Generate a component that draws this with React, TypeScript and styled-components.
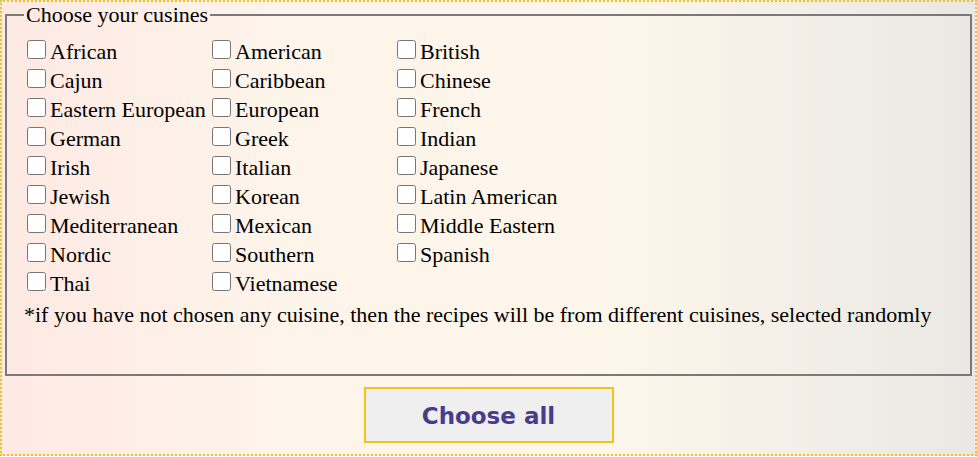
import styled, { createGlobalStyle } from "styled-components";

const GlobalStyle = createGlobalStyle`
	html, body {
		margin: 0;
		padding: 0;
		background: #ffffff;
	}
`;

const cuisines = [
	"African", "American", "British",
	"Cajun", "Caribbean", "Chinese",
	"Eastern European", "European", "French",
	"German", "Greek", "Indian",
	"Irish", "Italian", "Japanese",
	"Jewish", "Korean", "Latin American",
	"Mediterranean", "Mexican", "Middle Eastern",
	"Nordic", "Southern", "Spanish",
	"Thai", "Vietnamese",
];

const Wrapper = styled.form`
	box-sizing: border-box;
	width: 977px;
	height: 456px;
	border: 2px dotted #f3c21a;
	padding: 0 0 11px;
	background: linear-gradient(90deg, #fee9e3 0%, #fdf4ea 28%, #fdf6ea 62%, #eae8e4 100%);
	display: flex;
	flex-direction: column;
	align-items: center;
	font-family: "Liberation Serif", "Times New Roman", serif;
	font-size: 22px;
	color: #000;
`;

const Fieldset = styled.fieldset`
	box-sizing: border-box;
	align-self: stretch;
	margin: 0 3px;
	height: 374px;
	border: 2px solid #7a7a7a;
	padding: 8px 17px 0;
	min-inline-size: 0;
`;

const Legend = styled.legend`
	padding: 0 2px;
	line-height: 25px;
`;

const Grid = styled.div`
	display: grid;
	grid-template-columns: repeat(3, 185px);
	grid-auto-rows: 29px;
`;

const Option = styled.label`
	display: flex;
	align-items: flex-end;
	line-height: 25px;
	white-space: nowrap;
	cursor: pointer;
`;

const Box = styled.input`
	width: 19px;
	height: 19px;
	margin: 0 4px 5px 3px;
	flex-shrink: 0;
`;

const Note = styled.p`
	margin: 6px 0 0;
	line-height: 25px;
`;

const ChooseAll = styled.button`
	box-sizing: border-box;
	width: 250px;
	height: 56px;
	margin-top: 11px;
	padding: 2px 0 0;
	background: #efefef;
	border: 2px solid #f0c419;
	color: #483d8b;
	font-family: "DejaVu Sans", Verdana, sans-serif;
	font-weight: bold;
	font-size: 23px;
	cursor: pointer;
`;

const App = () => {
	return (
		<>
			<GlobalStyle />
			<Wrapper onSubmit={(e) => e.preventDefault()}>
				<Fieldset>
					<Legend>Choose your cusines</Legend>
					<Grid>
						{cuisines.map((c) => (
							<Option key={c}>
								<Box type="checkbox" name="cuisine" value={c} />
								{c}
							</Option>
						))}
					</Grid>
					<Note>
						*if you have not chosen any cuisine, then the recipes will be from different cuisines, selected randomly
					</Note>
				</Fieldset>
				<ChooseAll type="button">Choose all</ChooseAll>
			</Wrapper>
		</>
	);
};

export default App;
